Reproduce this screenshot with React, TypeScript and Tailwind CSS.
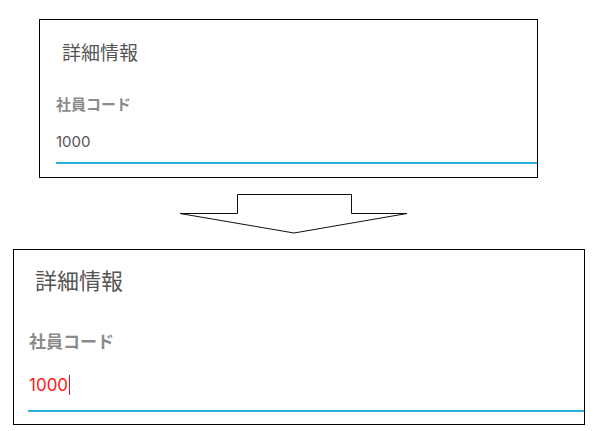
const jp = "font-['Noto_Sans_CJK_JP','Noto_Sans',sans-serif]";
const num = "font-['Inter','Roboto',sans-serif]";

function Arrow() {
  return (
    <svg width="232" height="42" viewBox="178 193 232 42" className="ml-[178px] mt-[15px] block">
      <polygon
        points="237.5,194.5 351.5,194.5 351.5,213.5 407,213.5 294,233 180,213.5 237.5,213.5"
        fill="white"
        stroke="#111"
        strokeWidth="1"
      />
    </svg>
  );
}

export default function App() {
  return (
    <div className="h-[431px] w-[602px] bg-white pt-[19px]">
      {/* before */}
      <div className="ml-[39px] h-[159px] w-[499px] border border-black">
        <div className={`${jp} ml-[22px] mt-[22px] text-[19px] leading-[19px] text-[#555]`}>詳細情報</div>
        <div className={`${jp} ml-[16px] mt-[35px] text-[15px] font-bold leading-[15px] text-[#8a8a8a]`}>社員コード</div>
        <div className={`${num} ml-[16px] mt-[23px] text-[15px] leading-[15px] text-[#555]`}>1000</div>
        <div className="ml-[16px] mt-[13px] h-[2px] bg-[#2bb1da]" />
      </div>

      <Arrow />

      {/* after */}
      <div className="ml-[13px] mt-[14px] h-[176px] w-[572px] border border-black">
        <div className={`${jp} ml-[21px] mt-[18px] text-[22px] leading-[22px] text-[#555]`}>詳細情報</div>
        <div className={`${jp} ml-[15px] mt-[42px] text-[17px] font-bold leading-[17px] text-[#8a8a8a]`}>社員コード</div>
        <div className={`${num} ml-[15px] mt-[26px] flex items-center text-[17px] leading-[17px] text-[#ff1a1a]`}>
          <span>1000</span>
          <span className="ml-px inline-block h-[20px] w-px bg-[#e8101a]" />
        </div>
        <div className="ml-[14px] mt-[15px] h-[2px] bg-[#2bb1da]" />
      </div>
    </div>
  );
}
